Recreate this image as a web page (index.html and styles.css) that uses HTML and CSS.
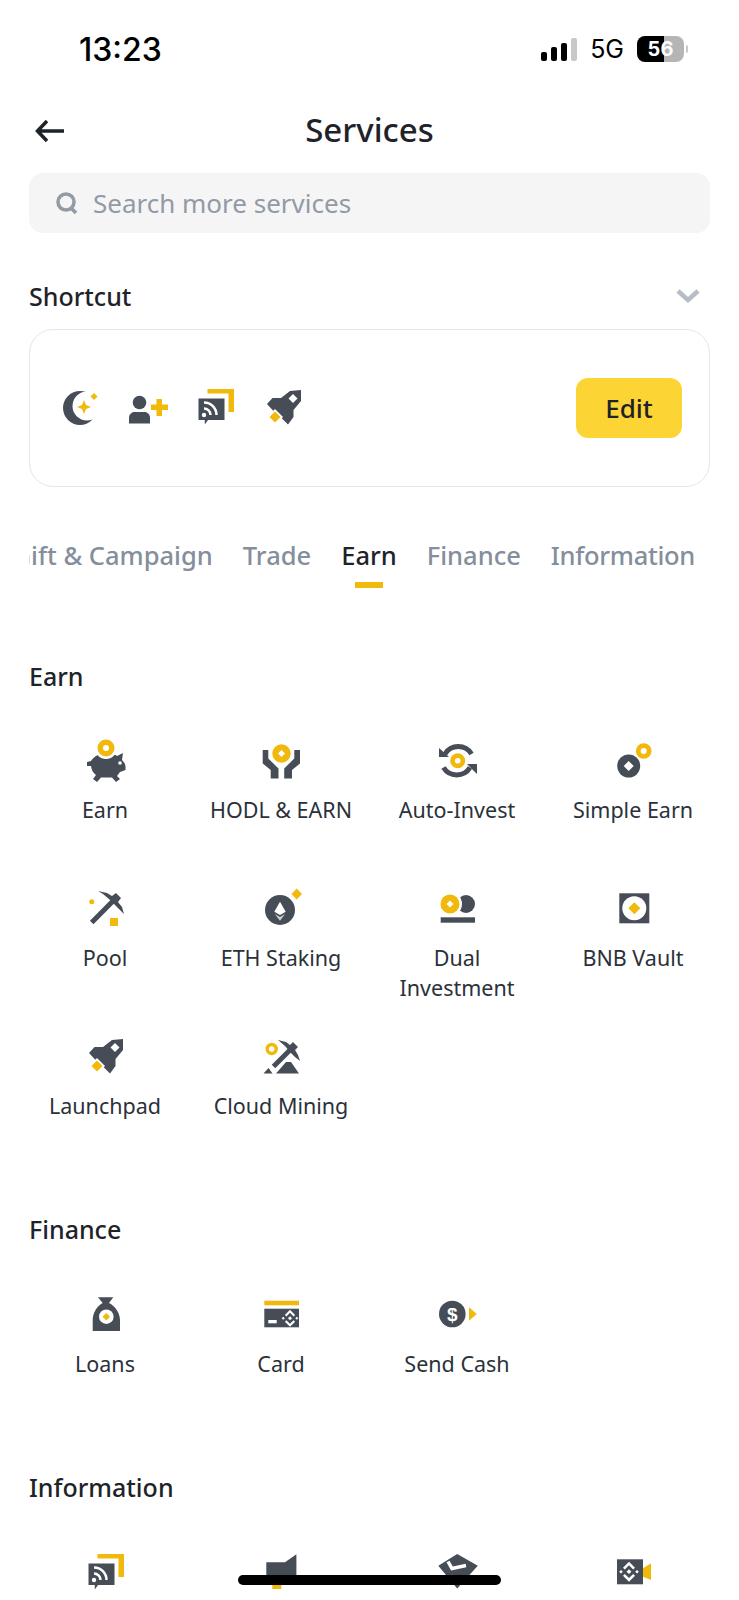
FILE: index.html
```html
<!DOCTYPE html>
<html lang="en">
<head>
    <meta charset="UTF-8">
    <meta name="viewport" content="width=device-width, initial-scale=1.0">
    <title>Services</title>
    <link rel="stylesheet" href="styles.css">
</head>
<body>
    <!-- shared icon parts -->
    <svg class="defs" width="0" height="0">
        <defs>
            <g id="bnb">
                <path class="wh" d="M0-2.4 2.4 0 0 2.4-2.4 0zM0-10 6-4 4.2-2.2 0-6.4-4.2-2.2-6-4zM0 10 6 4 4.2 2.2 0 6.4-4.2 2.2-6 4zM-8-1.8-6.2 0-8 1.8-9.8 0zM8-1.8 9.8 0 8 1.8 6.2 0z"/>
            </g>
            <g id="rss">
                <path class="yl" d="M14.5 3H41V26H35.5V7.5H14.5z"/>
                <path class="dk" d="M5.5 12.5H31.5V34H15L11.8 38.5V34H5.5z"/>
                <circle class="wh" cx="11" cy="29" r="2.2"/>
                <path class="line-wh" d="M11 22.5a6.5 6.5 0 0 1 6.5 6.5M11 16.5A12.5 12.5 0 0 1 23.5 29"/>
            </g>
            <g id="rocket">
                <path class="dk" d="M29 5 40 4V15L32.500 24V31L27 38.500 20 31.500 12 24.500 6 18 11.500 12H20z"/>
                <path class="wh" d="M32 8 36.5 12.5 32 17 27.5 12.5z"/>
                <path class="wh" d="M14 23 22 31 14 39 6 31z"/>
                <path class="yl" d="M14 25.5 19.5 31 14 36.5 8.5 31z"/>
            </g>
        </defs>
    </svg>

    <div class="status">
        <span class="time">13:23</span>
        <div class="status-right">
            <div class="signal">
                <i class="b1"></i><i class="b2"></i><i class="b3"></i><i class="b4"></i>
            </div>
            <span class="net">5G</span>
            <div class="battery">56</div>
            <div class="battery-nub"></div>
        </div>
    </div>

    <div class="nav">
        <svg class="back" width="30" height="24" viewBox="0 0 30 24">
            <path d="M29 12H3M12 2 2.500 12 12 22"/>
        </svg>
        <h1>Services</h1>
    </div>

    <div class="search">
        <svg class="search-icon" width="24" height="22" viewBox="0 0 24 22">
            <circle cx="11" cy="10" r="8"/>
            <path d="M16 16 21 21"/>
        </svg>
        <span>Search more services</span>
    </div>

    <div class="shortcut-head">
        <h2>Shortcut</h2>
        <svg class="chevron" width="24" height="14" viewBox="0 0 24 14">
            <path d="M2 2 12 11 22 2"/>
        </svg>
    </div>

    <div class="shortcut-card">
        <div class="shortcut-icons">
            <svg class="icon" viewBox="0 0 44 44">
                <circle class="dk" cx="23" cy="22" r="17"/>
                <circle class="wh" cx="30" cy="20" r="14.500"/>
                <path class="yl" d="M27 14 29 19 34 21 29 23 27 28 25 23 20 21 25 19z"/>
                <path class="yl" d="M37 7 40.500 10.500 37 14 33.500 10.500z"/>
            </svg>
            <svg class="icon" viewBox="0 0 44 44">
                <circle class="dk" cx="14.500" cy="16.500" r="6.800"/>
                <path class="dk" d="M4 37.500V31.500C4 28.500 6.500 26 9.500 26H19.500C22.500 26 25 28.500 25 31.500V37.500z"/>
                <path class="yl" d="M31.500 13H37V18.500H43V24H37V30H31.500V24H26V18.500H31.500z"/>
            </svg>
            <svg class="icon" viewBox="0 0 44 44"><use href="#rss"/></svg>
            <svg class="icon" viewBox="0 0 44 44"><use href="#rocket"/></svg>
        </div>
        <button class="edit" type="button">Edit</button>
    </div>

    <div class="tabs">
        <span class="tab">Gift &amp; Campaign</span>
        <span class="tab">Trade</span>
        <span class="tab active">Earn</span>
        <span class="tab">Finance</span>
        <span class="tab">Information</span>
    </div>

    <section class="group group-first">
        <h2>Earn</h2>
        <div class="grid">
            <div class="item">
                <svg class="icon" viewBox="0 0 44 44">
                    <path class="dk" d="M8 22C11 17 17 14 24 14 28 14 32 15 34 17L40 14 39 21C41 23 42.500 25 42.500 28V31L37 33 34 37 37 40 33 43 29 38.500H18L14 43 10 40 13 36C10 34 8.500 31 8 27H4V23z"/>
                    <circle class="wh" cx="23" cy="9" r="11"/>
                    <circle class="yl" cx="23" cy="9" r="8.500"/>
                    <circle class="wh" cx="23" cy="9" r="3"/>
                    <circle class="wh" cx="37" cy="24" r="1.800"/>
                </svg>
                <span class="label">Earn</span>
            </div>
            <div class="item">
                <svg class="icon" viewBox="0 0 44 44">
                    <path class="dk" d="M3.700 11H9.300V19.500L19.500 29.500V39.500H11.700V31L3.700 24.500z"/>
                    <path class="dk" d="M41 11H35.300V19.500L25.200 29.500V39.500H33V31L41 24.500z"/>
                    <circle class="yl" cx="22.500" cy="14.500" r="9.200"/>
                    <path class="wh" d="M22.500 11 26 14.500 22.500 18 19 14.500z"/>
                </svg>
                <span class="label">HODL &amp; EARN</span>
            </div>
            <div class="item">
                <svg class="icon" viewBox="0 0 44 44">
                    <path class="line-dk" d="M10 15A15.500 15.500 0 0 1 36.500 15M35 28.500A15.500 15.500 0 0 1 8.500 28.500"/>
                    <path class="dk" d="M4 9V18H14zM42 25V35L32 25z"/>
                    <circle class="yl" cx="22.700" cy="21.700" r="7.500"/>
                    <circle class="wh" cx="22.700" cy="21.700" r="2.800"/>
                </svg>
                <span class="label">Auto-Invest</span>
            </div>
            <div class="item">
                <svg class="icon" viewBox="0 0 44 44">
                    <circle class="dk" cx="17.700" cy="27" r="11.500"/>
                    <path class="wh" d="M17.700 22 22.700 27 17.700 32 12.700 27z"/>
                    <circle class="yl" cx="32.700" cy="12" r="7.800"/>
                    <circle class="wh" cx="32.700" cy="12" r="3"/>
                </svg>
                <span class="label">Simple Earn</span>
            </div>

            <div class="item">
                <svg class="icon" viewBox="0 0 44 44">
                    <path class="dk" d="M15 4 24 6 29 9 33 6 38 11 35 15 39 20 41 27 36 22 31 17 26 12 20 7z"/>
                    <path class="line-dk" d="M8.700 35.500 31 13"/>
                    <circle class="yl" cx="8.700" cy="14.700" r="2.500"/>
                    <rect class="yl" x="27" y="31" width="8" height="8"/>
                </svg>
                <span class="label">Pool</span>
            </div>
            <div class="item">
                <svg class="icon" viewBox="0 0 44 44">
                    <circle class="dk" cx="21" cy="23" r="15"/>
                    <path class="wh" d="M21 14.700 26.700 24.700 21 28 15.300 24.700z"/>
                    <path class="wh-soft" d="M15.800 27 21 30 26 27 21 33.700z"/>
                    <path class="yl" d="M37.700 1.500 43 7 37.700 12.500 32.500 7z"/>
                </svg>
                <span class="label">ETH Staking</span>
            </div>
            <div class="item">
                <svg class="icon" viewBox="0 0 44 44">
                    <circle class="dk" cx="31" cy="17" r="9"/>
                    <circle class="wh" cx="15" cy="17" r="12"/>
                    <circle class="yl" cx="15" cy="17" r="9.500"/>
                    <path class="wh" d="M15 13.500 18.500 17 15 20.500 11.500 17z"/>
                    <rect class="dk" x="5.700" y="30.300" width="34.300" height="5.400"/>
                </svg>
                <span class="label">Dual Investment</span>
            </div>
            <div class="item">
                <svg class="icon" viewBox="0 0 44 44">
                    <rect class="dk" x="8.300" y="6.300" width="30" height="30"/>
                    <circle class="wh" cx="23.300" cy="21.300" r="12"/>
                    <path class="yl" d="M23.300 15.300 29.300 21.300 23.300 27.300 17.300 21.300z"/>
                </svg>
                <span class="label">BNB Vault</span>
            </div>

            <div class="item">
                <svg class="icon" viewBox="0 0 44 44"><use href="#rocket"/></svg>
                <span class="label">Launchpad</span>
            </div>
            <div class="item">
                <svg class="icon" viewBox="0 0 44 44">
                    <path class="dk" d="M19 5 27 7 31 10 34 7 39 12 36 15 39 20 41 26 36 22 31 17 26 11z"/>
                    <path class="line-dk" d="M14.500 31.500 31 15"/>
                    <path class="dk" d="M4.500 38.500 9.500 33 13.500 38.500zM17 38.500 27 27 32 27 35.500 32 40 38.500z"/>
                    <circle class="line-yl" cx="12.700" cy="14" r="4.500"/>
                </svg>
                <span class="label">Cloud Mining</span>
            </div>
        </div>
    </section>

    <section class="group">
        <h2>Finance</h2>
        <div class="grid">
            <div class="item">
                <svg class="icon" viewBox="0 0 44 44">
                    <path class="dk" d="M15 4.300H30.300L26 10C32 13 37 20 37 27V38H9.700V27C9.700 20 14 13 19.700 10z"/>
                    <circle class="wh" cx="23.300" cy="23.700" r="7.300"/>
                    <path class="yl" d="M23.300 20 27 23.700 23.300 27.400 19.600 23.700z"/>
                </svg>
                <span class="label">Loans</span>
            </div>
            <div class="item">
                <svg class="icon" viewBox="0 0 44 44">
                    <rect class="yl" x="5.300" y="7.700" width="34.700" height="4.600"/>
                    <rect class="dk" x="5.300" y="15.700" width="34.700" height="18.600"/>
                    <rect class="wh" x="9.300" y="27" width="8.400" height="3.300"/>
                    <use href="#bnb" transform="translate(31 25.300) scale(.85)"/>
                </svg>
                <span class="label">Card</span>
            </div>
            <div class="item">
                <svg class="icon" viewBox="0 0 44 44">
                    <circle class="dk" cx="17.300" cy="21" r="13.300"/>
                    <text class="dollar" x="17.300" y="27.500" text-anchor="middle">$</text>
                    <path class="yl" d="M34 14.300 41.700 21 34 27.700z"/>
                </svg>
                <span class="label">Send Cash</span>
            </div>
        </div>
    </section>

    <section class="group">
        <h2>Information</h2>
        <div class="grid">
            <div class="item">
                <svg class="icon" viewBox="0 0 44 44"><use href="#rss"/></svg>
            </div>
            <div class="item">
                <svg class="icon" viewBox="0 0 44 44">
                    <rect class="yl" x="13.300" y="28" width="9" height="10"/>
                    <path class="dk" d="M7.300 11.300H26L37.400 3.300V30H7.300z"/>
                </svg>
            </div>
            <div class="item">
                <svg class="icon" viewBox="0 0 44 44">
                    <path class="dk" d="M22.200 3 42.800 14.700 22.200 37.500 3.300 14.700z"/>
                    <path class="line-wh-thick" d="M13 10.500 17 17.500 31 14.500"/>
                </svg>
            </div>
            <div class="item">
                <svg class="icon" viewBox="0 0 44 44">
                    <rect class="dk" x="6" y="8.300" width="26" height="25"/>
                    <path class="yl" d="M32 17.300 40 12.300V29L32 25.700z"/>
                    <use href="#bnb" transform="translate(18 20.700)"/>
                </svg>
            </div>
        </div>
    </section>

    <div class="home-bar"></div>
</body>
</html>
```

FILE: styles.css
```css
html, body {
    height: 1600px;
    overflow: hidden;
}
body {
    position: relative;
    margin: 0;
    background: #fff;
    color: #1e2329;
    font-family: "Noto Sans", Arial, sans-serif;
}
h1, h2 {
    margin: 0;
    font-weight: 500;
}
.defs {
    position: absolute;
}

/* icon colours */
.dk { fill: #474d57; }
.yl { fill: #f0b90b; }
.wh { fill: #fff; }
.wh-soft { fill: #fff; opacity: .75; }
.line-dk { fill: none; stroke: #474d57; stroke-width: 5; }
.line-wh { fill: none; stroke: #fff; stroke-width: 2.5; }
.line-wh-thick { fill: none; stroke: #fff; stroke-width: 3.500; }
.line-yl { fill: none; stroke: #f0b90b; stroke-width: 3.500; }
.dollar {
    fill: #fff;
    font-family: "Liberation Sans", Arial, sans-serif;
    font-size: 19px;
    font-weight: 700;
}
.icon {
    display: block;
    width: 44px;
    height: 44px;
    flex: none;
}

/* status bar */
.status {
    display: flex;
    justify-content: space-between;
    align-items: center;
    height: 98px;
    padding: 0 51px 0 79px;
    font-family: Inter, "Liberation Sans", sans-serif;
    color: #000;
}
.time {
    font-size: 32px;
    font-weight: 500;
}
.status-right {
    display: flex;
    align-items: center;
}
.signal {
    display: flex;
    align-items: flex-end;
    gap: 4px;
    height: 24px;
}
.signal i {
    display: block;
    width: 6px;
    border-radius: 2px;
    background: #000;
}
.signal .b1 { height: 9px; }
.signal .b2 { height: 14px; }
.signal .b3 { height: 18px; }
.signal .b4 { height: 23px; background: #c8c8c8; }
.net {
    margin-left: 13px;
    font-size: 25px;
    font-weight: 400;
}
.battery {
    width: 47px;
    height: 26px;
    margin-left: 13px;
    border-radius: 8px;
    background: linear-gradient(90deg, #000 57%, #b5b5b5 57%);
    color: #fff;
    font-size: 20px;
    font-weight: 700;
    line-height: 26px;
    text-align: center;
}
.battery-nub {
    width: 2px;
    height: 8px;
    margin-left: 2px;
    border-radius: 0 2px 2px 0;
    background: #c8c8c8;
}

/* header */
.nav {
    position: relative;
    display: flex;
    justify-content: center;
    align-items: center;
    box-sizing: border-box;
    height: 66px;
    padding-bottom: 3px;
}
.nav h1 {
    font-size: 33px;
}
.back {
    position: absolute;
    left: 35px;
    top: 21px;
    fill: none;
    stroke: #1e2329;
    stroke-width: 3.500;
}

.search {
    display: flex;
    align-items: center;
    gap: 14px;
    height: 60px;
    margin: 9px 29px 0;
    padding-left: 26px;
    border-radius: 14px;
    background: #f5f5f5;
    color: #929aa5;
    font-size: 26px;
}
.search-icon {
    fill: none;
    stroke: #929aa5;
    stroke-width: 3.500;
}

.shortcut-head {
    display: flex;
    justify-content: space-between;
    align-items: center;
    height: 40px;
    margin: 44px 29px 0;
}
.shortcut-head h2,
.group h2 {
    height: 40px;
    font-size: 25px;
    line-height: 38px;
}
.chevron {
    margin: 0 10px 2px 0;
    fill: none;
    stroke: #b7bdc6;
    stroke-width: 4.500;
}
.shortcut-card {
    display: flex;
    justify-content: space-between;
    align-items: center;
    box-sizing: border-box;
    height: 158px;
    margin: 12px 29px 0;
    padding: 0 27px;
    border: 1px solid #e6e6e6;
    border-radius: 24px;
}
.shortcut-icons {
    display: flex;
    gap: 24px;
}
.edit {
    width: 106px;
    height: 60px;
    border: none;
    border-radius: 12px;
    background: #fcd535;
    color: #1e2329;
    font-family: inherit;
    font-size: 26px;
    font-weight: 500;
}

/* tabs */
.tabs {
    display: flex;
    justify-content: flex-end;
    align-items: flex-start;
    gap: 30px;
    height: 53px;
    margin: 48px 29px 0;
    padding-right: 15px;
    overflow: hidden;
    font-size: 25.500px;
    font-weight: 500;
    line-height: 40px;
    color: #848e9c;
}
.tab {
    flex: none;
    white-space: nowrap;
}
.tab:last-child {
    letter-spacing: -.3px;
}
.tab.active {
    color: #1e2329;
}
.tab.active::after {
    content: "";
    display: block;
    width: 28px;
    height: 6px;
    margin: 7px auto 0;
    background: #f0b90b;
}

/* service groups */
.group {
    margin-top: 27px;
}
.group-first {
    margin-top: 69px;
}
.group h2 {
    margin-left: 29px;
}
.grid {
    display: grid;
    grid-template-columns: repeat(4, 176px);
    grid-auto-rows: 148px;
    margin: 43px 0 0 17px;
}
.group-first .grid {
    margin-top: 42px;
}
.item {
    display: flex;
    flex-direction: column;
    align-items: center;
}
.label {
    width: 165px;
    margin-top: 12px;
    font-size: 21.500px;
    line-height: 30px;
    text-align: center;
    color: #2b3139;
}

.home-bar {
    position: absolute;
    left: 238px;
    top: 1575px;
    width: 263px;
    height: 10px;
    border-radius: 5px;
    background: #000;
}
```
